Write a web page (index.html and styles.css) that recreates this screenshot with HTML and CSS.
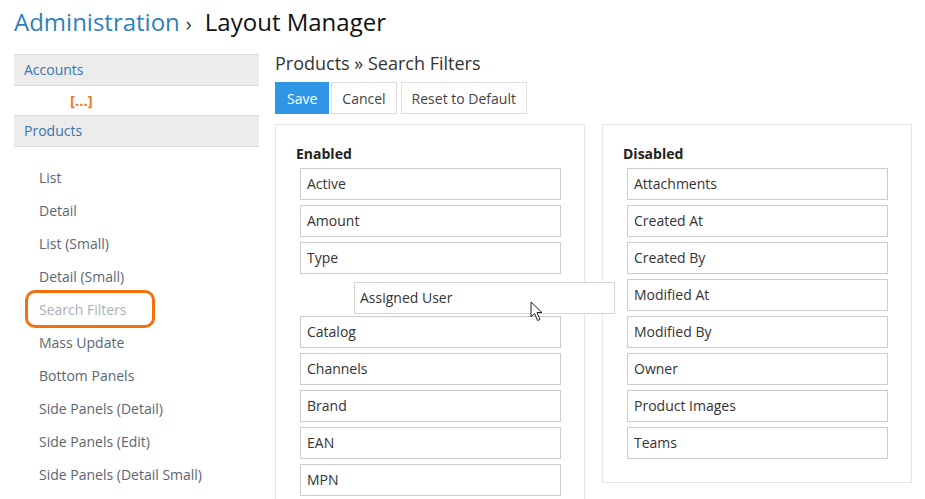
FILE: index.html
```html
<!DOCTYPE html>
<html>
<head>
<meta charset="utf-8">
<link rel="stylesheet" href="styles.css">
</head>
<body>
<div class="page">
  <h1 class="title"><a class="crumb">Administration</a><span class="sep">›</span>Layout Manager</h1>
  <div class="layout">
    <aside class="sidebar">
      <div class="scope">Accounts</div>
      <div class="ellipsis">[...]</div>
      <div class="scope">Products</div>
      <ul class="types">
        <li>List</li>
        <li>Detail</li>
        <li>List (Small)</li>
        <li>Detail (Small)</li>
        <li class="active">Search Filters<span class="ring"></span></li>
        <li>Mass Update</li>
        <li>Bottom Panels</li>
        <li>Side Panels (Detail)</li>
        <li>Side Panels (Edit)</li>
        <li>Side Panels (Detail Small)</li>
      </ul>
    </aside>
    <main class="main">
      <h2 class="subtitle">Products » Search Filters</h2>
      <div class="buttons">
        <button class="btn primary">Save</button>
        <button class="btn">Cancel</button>
        <button class="btn">Reset to Default</button>
      </div>
      <div class="columns">
        <section class="panel enabled">
          <h3 class="panel-label">Enabled</h3>
          <ul class="fields">
            <li>Active</li>
            <li>Amount</li>
            <li>Type</li>
            <li class="placeholder"></li>
            <li>Catalog</li>
            <li>Channels</li>
            <li>Brand</li>
            <li>EAN</li>
            <li>MPN</li>
          </ul>
          <div class="dragging">Assigned User</div>
          <svg class="cursor" width="14" height="22" viewBox="0 0 14 22"><path d="M1 1 L1 16 L4.5 12.5 L7.5 19.5 L10 18.5 L7 11.5 L12 11.5 Z" fill="#fff" stroke="#222" stroke-width="1" stroke-linejoin="round"/></svg>
        </section>
        <section class="panel disabled">
          <h3 class="panel-label">Disabled</h3>
          <ul class="fields">
            <li>Attachments</li>
            <li>Created At</li>
            <li>Created By</li>
            <li>Modified At</li>
            <li>Modified By</li>
            <li>Owner</li>
            <li>Product Images</li>
            <li>Teams</li>
          </ul>
        </section>
      </div>
    </main>
  </div>
</div>
</body>
</html>
```

FILE: styles.css
```css
html, body {
  margin: 0;
  padding: 0;
  background: #fff;
  font-family: "Open Sans", "Liberation Sans", sans-serif;
  color: #333;
  overflow: hidden;
}
.page {
  padding: 0 13px 0 14px;
  height: 499px;
  overflow: hidden;
}
.title {
  margin: 0;
  padding-top: 5px;
  height: 54px;
  box-sizing: border-box;
  font-size: 24px;
  font-weight: 400;
  line-height: 34px;
  color: #111;
}
.crumb {
  color: #2f7fbd;
}
.sep {
  color: #333;
  font-size: 20px;
  margin: 0 13px 0 6px;
}
.layout {
  display: flex;
  gap: 16px;
}
.sidebar {
  width: 245px;
  flex: none;
}
.scope {
  background: #ececec;
  border-top: 1px solid #dcdcdc;
  border-bottom: 1px solid #dcdcdc;
  height: 30px;
  line-height: 30px;
  padding-left: 10px;
  font-size: 14px;
  color: #3a74ad;
}
.ellipsis {
  height: 29px;
  line-height: 28px;
  padding-left: 56px;
  font-size: 15px;
  font-weight: 700;
  color: #f07a22;
}
.types {
  list-style: none;
  margin: 0;
  padding: 14px 0 0 25px;
}
.types li {
  position: relative;
  height: 33px;
  line-height: 33px;
  font-size: 14px;
  color: #5c6670;
}
.types li.active {
  color: #a8b1ba;
}
.ring {
  position: absolute;
  left: -14px;
  top: -3px;
  width: 130px;
  height: 38px;
  box-sizing: border-box;
  border: 3px solid #f4700f;
  border-radius: 10px;
}
.main {
  flex: 1;
  min-width: 0;
}
.subtitle {
  margin: 0;
  height: 28px;
  font-size: 18px;
  font-weight: 400;
  line-height: 18px;
  color: #333;
}
.buttons {
  display: flex;
  gap: 2px;
}
.btn {
  font-family: inherit;
  font-size: 14px;
  height: 32px;
  padding: 0 10px;
  border: 1px solid #ddd;
  background: #fff;
  color: #444;
}
.btn + .btn + .btn {
  margin-left: 2px;
}
.btn.primary {
  background: #2e96e4;
  border-color: #2e96e4;
  color: #fff;
  padding: 0 11px;
}
.columns {
  display: flex;
  gap: 17px;
  margin-top: 10px;
  align-items: flex-start;
}
.panel {
  position: relative;
  width: 310px;
  box-sizing: border-box;
  border: 1px solid #e6e6e6;
  padding: 19px 24px 23px 24px;
}
.panel.enabled {
  height: 390px;
}
.panel-label {
  margin: 0 0 5px -4px;
  font-size: 14px;
  font-weight: 700;
  line-height: 19px;
  color: #222;
}
.fields {
  list-style: none;
  margin: 0;
  padding: 0;
  display: flex;
  flex-direction: column;
  gap: 5px;
}
.fields li {
  height: 32px;
  box-sizing: border-box;
  border: 1px solid #ccc;
  padding-left: 6px;
  line-height: 30px;
  font-size: 14px;
  color: #333;
  width: 261px;
}
.fields li.placeholder {
  border-color: transparent;
}
.dragging {
  position: absolute;
  left: 78px;
  top: 157px;
  width: 261px;
  height: 32px;
  box-sizing: border-box;
  border: 1px solid #d4d4d4;
  background: #fff;
  padding-left: 5px;
  line-height: 30px;
  font-size: 14px;
  color: #333;
  z-index: 2;
}
.cursor {
  position: absolute;
  left: 254px;
  top: 176px;
  z-index: 3;
}
```
